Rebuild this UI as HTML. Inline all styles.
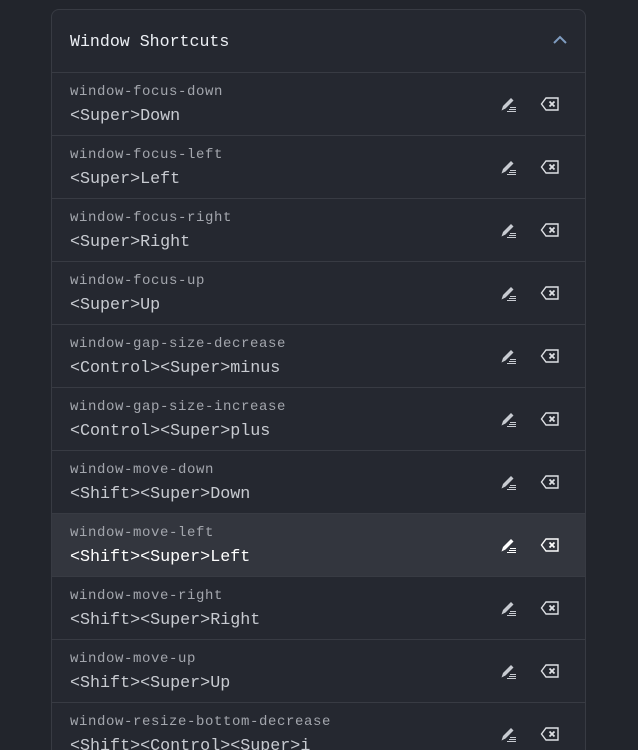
<!DOCTYPE html>
<html><head><meta charset="utf-8"><style>
html,body{margin:0;padding:0;background:#22252c;width:638px;height:750px;overflow:hidden;font-family:"Liberation Mono",monospace;}
.wrap{position:relative;width:638px;height:750px;overflow:hidden;}
.card{position:absolute;left:51px;top:9px;width:533px;height:760px;border:1px solid #383b43;border-radius:8px;background:#252830;}
.hdr{height:62px;border-bottom:1px solid #383b43;position:relative;}
.hdr .t{position:absolute;left:18px;top:22px;font-size:16.6px;color:#eceff4;}
.hdr svg{position:absolute;left:500px;top:25px;}
.row{height:62px;border-bottom:1px solid #383b43;position:relative;}
.row.h{background:#33363e;}
.n{position:absolute;left:18px;top:11px;font-size:14px;letter-spacing:0.6px;color:#a3a6ad;}
.v{position:absolute;left:18px;top:34px;font-size:16.7px;color:#c8cbd1;}
.row.h .v{color:#fff;}
.e{position:absolute;left:448px;top:22px;}
.d{position:absolute;left:488px;top:23px;}
</style></head><body>
<div class="wrap">
<div class="card">
<div class="hdr"><div class="t">Window Shortcuts</div>
<svg width="16" height="10" viewBox="0 0 16 10"><path d="M2 8 L8 2 L14 8" fill="none" stroke="#7f9cc0" stroke-width="2"/></svg></div>
<div id="rows"></div>
</div>
</div>
<script>
var d=[["window-focus-down","&lt;Super&gt;Down"],["window-focus-left","&lt;Super&gt;Left"],["window-focus-right","&lt;Super&gt;Right"],["window-focus-up","&lt;Super&gt;Up"],["window-gap-size-decrease","&lt;Control&gt;&lt;Super&gt;minus"],["window-gap-size-increase","&lt;Control&gt;&lt;Super&gt;plus"],["window-move-down","&lt;Shift&gt;&lt;Super&gt;Down"],["window-move-left","&lt;Shift&gt;&lt;Super&gt;Left"],["window-move-right","&lt;Shift&gt;&lt;Super&gt;Right"],["window-move-up","&lt;Shift&gt;&lt;Super&gt;Up"],["window-resize-bottom-decrease","&lt;Shift&gt;&lt;Control&gt;&lt;Super&gt;i"]];
var h="";d.forEach(function(r,i){var c=i==7?"#fff":"#c8cbd1";var c2=i==7?"#fff":"#dfe1e5";
h+='<div class="row'+(i==7?' h':'')+'"><div class="n">'+r[0]+'</div><div class="v">'+r[1]+'</div>'+
'<svg class="e" width="18" height="17" viewBox="0 0 18 17"><path d="M1.5 15.5 L3 11 L11 3 L13.5 5.5 L5.5 13.5 Z" fill="'+c+'"/><path d="M10 12.5h6M9 14.5h7M7 16.5h9" stroke="'+c+'" stroke-width="1"/></svg>'+
'<svg class="d" width="20" height="16" viewBox="0 0 20 16"><path d="M6 2 H18 V14 H6 L1.5 8 Z" fill="none" stroke="'+c2+'" stroke-width="1.4"/><path d="M9.5 5.5 L14.5 10.5 M14.5 5.5 L9.5 10.5" stroke="'+c2+'" stroke-width="1.8"/></svg></div>';});
document.getElementById("rows").innerHTML=h;
</script>
</body></html>
